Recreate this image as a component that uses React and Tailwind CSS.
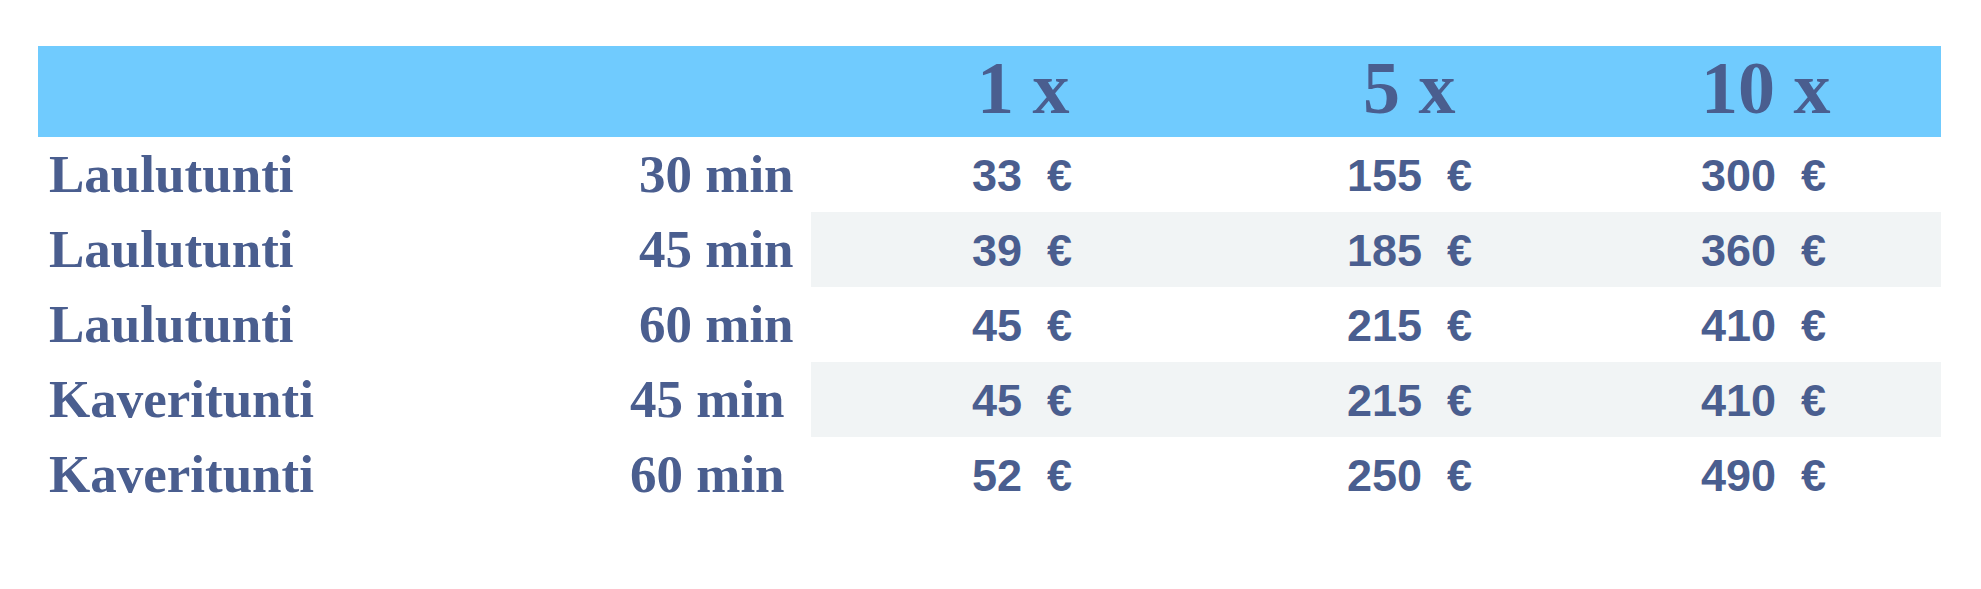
const rows = [
  { name: 'Laulutunti', time: '30 min', shift: 'ml-[590px]', prices: ['33', '155', '300'] },
  { name: 'Laulutunti', time: '45 min', shift: 'ml-[590px]', prices: ['39', '185', '360'] },
  { name: 'Laulutunti', time: '60 min', shift: 'ml-[590px]', prices: ['45', '215', '410'] },
  { name: 'Kaveritunti', time: '45 min', shift: 'ml-[581px]', prices: ['45', '215', '410'] },
  { name: 'Kaveritunti', time: '60 min', shift: 'ml-[581px]', prices: ['52', '250', '490'] },
];

const serif = "font-['Liberation_Serif',_'Times_New_Roman',_serif] font-bold";
const sans = "font-['Liberation_Sans',_Arial,_sans-serif] font-bold";

function PriceCells({ prices }) {
  const widths = ['w-[375px]', 'w-[354px]', 'flex-1'];
  return (
    <div className="flex flex-1 pl-[161px]">
      {prices.map((p, i) => (
        <div
          key={i}
          className={`${widths[i]} ${sans} whitespace-pre pt-[2px] text-[45px] leading-[73px]`}
        >
          {p}  €
        </div>
      ))}
    </div>
  );
}

export default function App() {
  return (
    <div className="min-h-[589px] bg-white pl-[38px] pt-[46px] text-[#4a5e8f]">
      <div className="w-[1903px]">
        <div className="flex h-[91px] bg-[#70cbfe]">
          <div className="w-[773px]" />
          <div className={`flex flex-1 pl-[161px] pt-[5px] ${serif} text-[74px] leading-none`}>
            <div className="w-[375px] pl-[5px]">1 x</div>
            <div className="w-[354px] pl-[16px]">5 x</div>
            <div className="flex-1">10 x</div>
          </div>
        </div>

        {rows.map((r, i) => (
          <div key={i} className="flex h-[75px]">
            <div className={`flex w-[773px] pl-[11px] ${serif} text-[53px] leading-[75px]`}>
              <span className="w-0 whitespace-nowrap">{r.name}</span>
              <span className={`${r.shift} whitespace-nowrap`}>{r.time}</span>
            </div>
            <div className={`flex flex-1 ${i % 2 === 1 ? 'bg-[#f1f4f5]' : ''}`}>
              <PriceCells prices={r.prices} />
            </div>
          </div>
        ))}
      </div>
    </div>
  );
}
